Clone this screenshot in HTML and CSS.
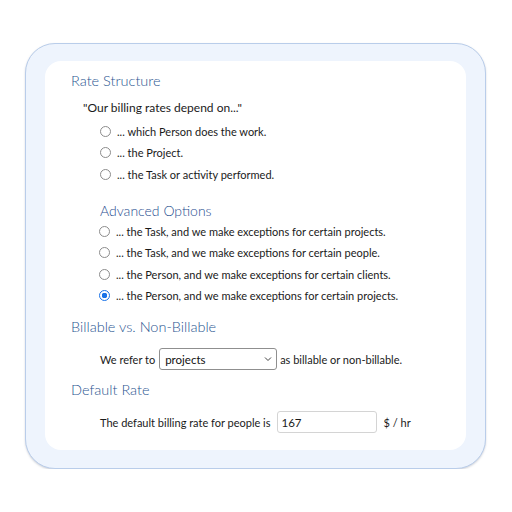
FILE: index.html
```html
<!DOCTYPE html>
<html>
<head>
<meta charset="utf-8">
<link rel="stylesheet" href="styles.css">
</head>
<body>
<div class="outer">
  <div class="inner">
    <h2 class="heading">Rate Structure</h2>
    <p class="quote">"Our billing rates depend on..."</p>
    <div class="options">
      <label class="opt"><span class="radio"></span>... which Person does the work.</label>
      <label class="opt"><span class="radio"></span>... the Project.</label>
      <label class="opt"><span class="radio"></span>... the Task or activity performed.</label>
    </div>
    <h3 class="subheading">Advanced Options</h3>
    <div class="options adv">
      <label class="opt"><span class="radio"></span>... the Task, and we make exceptions for certain projects.</label>
      <label class="opt"><span class="radio"></span>... the Task, and we make exceptions for certain people.</label>
      <label class="opt"><span class="radio"></span>... the Person, and we make exceptions for certain clients.</label>
      <label class="opt"><span class="radio checked"></span>... the Person, and we make exceptions for certain projects.</label>
    </div>
    <h2 class="heading h-bill">Billable vs. Non-Billable</h2>
    <div class="row row-bill">
      <span>We refer to</span>
      <span class="select"><span class="sel-text">projects</span><svg class="chev" width="8" height="6" viewBox="0 0 8 6"><path d="M1 1.5 L4 4.5 L7 1.5" fill="none" stroke="#444" stroke-width="1"/></svg></span>
      <span>as billable or non-billable.</span>
    </div>
    <h2 class="heading h-rate">Default Rate</h2>
    <div class="row row-rate">
      <span>The default billing rate for people is</span>
      <span class="input">167</span>
      <span class="unit">$ / hr</span>
    </div>
  </div>
</div>
</body>
</html>
```
FILE: styles.css
```css
html, body {
  margin: 0;
  padding: 0;
  background: #ffffff;
}
body {
  font-family: Lato, "Noto Sans", sans-serif;
  color: #1a1a1a;
  padding: 43px 0 0 25px;
}
.outer {
  box-sizing: border-box;
  width: 461px;
  height: 426px;
  background: #eef4fd;
  border: 1px solid #b9cdea;
  border-radius: 30px;
  padding: 17px 19px 18px 19px;
  box-shadow: 0 1px 2px rgba(120, 130, 150, 0.35);
}
.inner {
  box-sizing: border-box;
  height: 100%;
  background: #ffffff;
  border-radius: 16px;
  padding: 10px 20px 0 26px;
}
.heading {
  margin: 0;
  font-size: 14.5px;
  font-weight: 300;
  color: #2a5590;
  line-height: 20px;
}
.quote {
  margin: 9px 0 0 12px;
  font-size: 12px;
  line-height: 16px;
}
.options {
  display: flex;
  flex-direction: column;
  margin: 5px 0 0 29px;
}
.opt {
  display: flex;
  align-items: center;
  height: 21.3px;
  font-size: 11px;
}
.radio {
  box-sizing: border-box;
  width: 11px;
  height: 11px;
  border: 1px solid #8c8c8c;
  border-radius: 50%;
  margin-right: 6px;
  background: #fff;
}
.radio.checked {
  border: 1.5px solid #1a73e8;
  background: radial-gradient(circle, #1a73e8 0 2.6px, #fff 3px);
}
.subheading {
  margin: 17px 0 0 29px;
  font-size: 14px;
  font-weight: 300;
  color: #1f4d8f;
  line-height: 18px;
}
.adv {
  margin-top: 1px;
  margin-left: 28px;
}
.h-bill {
  margin-top: 11px;
}
.row {
  display: flex;
  align-items: center;
  font-size: 11px;
  margin-left: 29px;
}
.row-bill {
  margin-top: 11px;
}
.select {
  box-sizing: border-box;
  display: flex;
  align-items: center;
  justify-content: space-between;
  width: 118px;
  height: 22px;
  border: 1px solid #8f8f8f;
  border-radius: 3px;
  margin: 0 3px 0 4px;
  padding: 0 4px 0 5px;
  font-size: 11.5px;
  color: #111;
}
.h-rate {
  margin-top: 10px;
}
.row-rate {
  margin-top: 11px;
}
.input {
  box-sizing: border-box;
  display: flex;
  align-items: center;
  width: 100px;
  height: 22px;
  border: 1px solid #d4d4d4;
  border-radius: 3px;
  margin: 0 7px 0 6px;
  padding: 0 4px;
  font-size: 11.5px;
}
```
